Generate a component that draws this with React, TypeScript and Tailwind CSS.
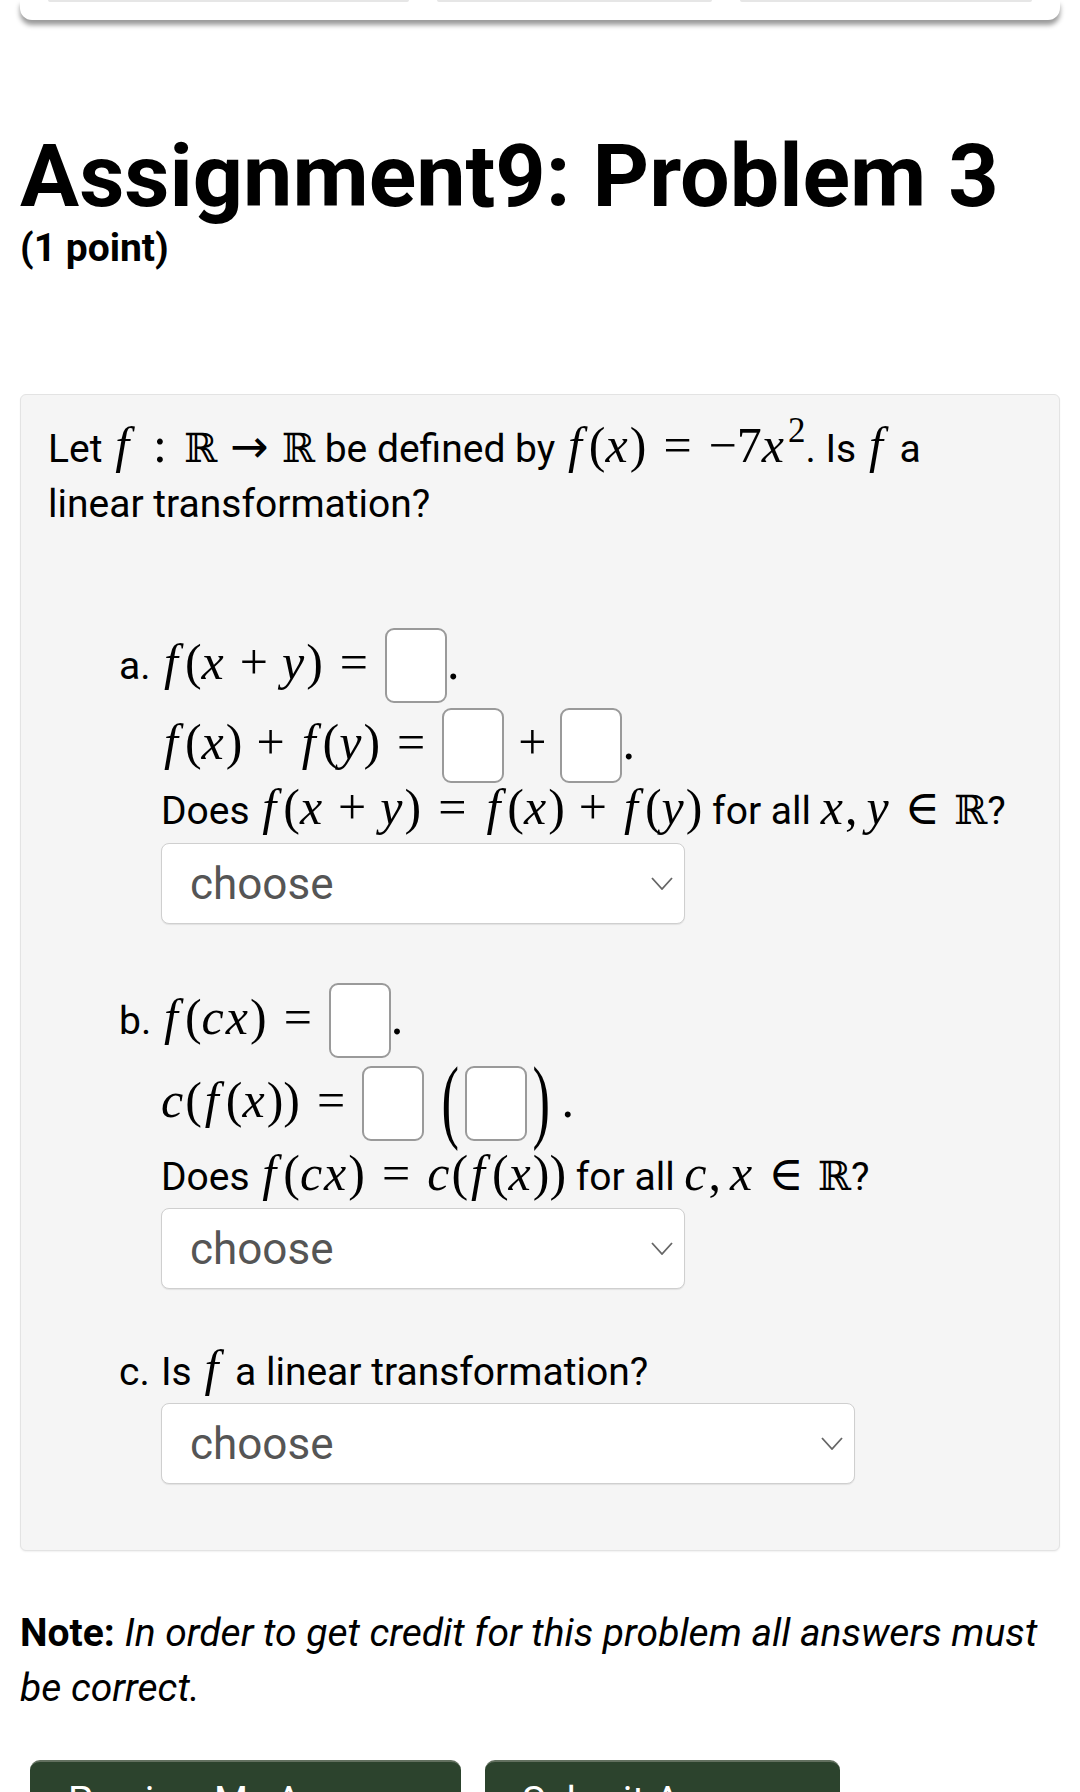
import React from "react";

function M({ children }: { children: React.ReactNode }) {
  return (
    <span className="font-['Liberation_Serif',serif] text-[50px] leading-[0] whitespace-nowrap text-black">
      {children}
    </span>
  );
}

function F() {
  return <i className="italic pl-[3px] pr-[7px]">f</i>;
}
function V({ c }: { c: string }) {
  return <i className="italic pr-[2px]">{c}</i>;
}
function Rel({ c }: { c: string }) {
  return <span className="px-[17px]">{c}</span>;
}
function Bin({ c }: { c: string }) {
  return <span className="px-[14px]">{c}</span>;
}
function Arrow() {
  return <span className="px-[13px] font-['DejaVu_Sans',sans-serif] text-[46px]">→</span>;
}
function In() {
  return <span className="px-[14px] font-['DejaVu_Serif','DejaVu_Sans',serif] text-[48px]">∈</span>;
}
function R() {
  return <span className="font-['DejaVu_Serif','DejaVu_Sans',serif] text-[40px]">ℝ</span>;
}
function Box() {
  return (
    <span className="inline-block align-baseline w-[62px] h-[75px] -mt-[51px] -mb-[24px] bg-white border-2 border-[#9a9a9a] rounded-[9px]" />
  );
}
function BigParen({ c }: { c: string }) {
  return (
    <span className="inline-block align-baseline scale-y-[1.85] scale-x-[1.05] origin-[50%_72%] px-[6px]">{c}</span>
  );
}

function Select({ w }: { w: string }) {
  return (
    <div
      className={`${w} h-[81px] bg-white border border-[#cfcfcf] rounded-[8px] shadow-[0_1px_1px_rgba(0,0,0,0.08)] flex items-center justify-between pl-[28px] pr-[11px]`}
    >
      <span className="text-[44px] leading-[44px] text-[#555]">choose</span>
      <svg width="22" height="13" viewBox="0 0 22 13" fill="none">
        <path d="M1 1 L11 12 L21 1" stroke="#666" strokeWidth="1.8" />
      </svg>
    </div>
  );
}

export default function App() {
  return (
    <div className="w-[1080px] h-[1792px] overflow-hidden bg-white font-['Roboto',sans-serif] text-black">
      {/* top card */}
      <div className="mx-[20px] h-[20px] bg-white rounded-b-[12px] shadow-[0_5px_5px_rgba(0,0,0,0.4)] flex gap-[28px] px-[28px]">
        <div className="w-[367px] h-[2px] bg-[#e6e6e6] rounded-b" />
        <div className="w-[280px] h-[2px] bg-[#e6e6e6] rounded-b" />
        <div className="w-[297px] h-[2px] bg-[#e6e6e6] rounded-b" />
      </div>

      <div className="px-[20px]">
        <h1 className="mt-[106px] text-[88px] leading-[100px] font-bold">
          Assignment9: Problem 3
        </h1>
        <div className="text-[39px] leading-[44px] font-bold">(1 point)</div>

        {/* problem box */}
        <div className="mt-[124px] bg-[#f5f5f5] border border-[#e3e3e3] rounded-[6px] shadow-[0_1px_2px_rgba(0,0,0,0.06)] pl-[27px] pr-[20px] pt-[27px] pb-[66px] text-[39px] leading-[55px]">
          <div>
            Let{" "}
            <M>
              <F />
              <Rel c=":" />
              <R />
              <Arrow />
              <R />
            </M>{" "}
            be defined by{" "}
            <M>
              <F />
              (<V c="x" />)
              <Rel c="=" />
              −7
              <V c="x" />
              <span className="inline-block relative -top-[20px] text-[35px] leading-[0] pl-[2px]">2</span>
            </M>
            . Is{" "}
            <M>
              <F />
            </M>{" "}
            a
            <br />
            linear transformation?
          </div>

          {/* part a */}
          <div className="flex mt-[107px]">
            <span className="w-[42px] ml-[71px] shrink-0">a.</span>
            <div>
              <div>
                <M>
                  <F />
                  (<V c="x" />
                  <Bin c="+" />
                  <V c="y" />)
                  <Rel c="=" />
                  <Box />.
                </M>
              </div>
              <div className="mt-[25px]">
                <M>
                  <F />
                  (<V c="x" />)
                  <Bin c="+" />
                  <F />
                  (<V c="y" />)
                  <Rel c="=" />
                  <Box />
                  <Bin c="+" />
                  <Box />.
                </M>
              </div>
              <div className="mt-[10px]">
                Does{" "}
                <M>
                  <F />
                  (<V c="x" />
                  <Bin c="+" />
                  <V c="y" />)
                  <Rel c="=" />
                  <F />
                  (<V c="x" />)
                  <Bin c="+" />
                  <F />
                  (<V c="y" />)
                </M>{" "}
                for all{" "}
                <M>
                  <V c="x" />,<span className="pl-[9px]" />
                  <V c="y" />
                  <In />
                  <R />
                </M>
                ?
              </div>
              <div className="mt-[4px]">
                <Select w="w-[524px]" />
              </div>
            </div>
          </div>

          {/* part b */}
          <div className="flex mt-[70px]">
            <span className="w-[42px] ml-[71px] shrink-0">b.</span>
            <div>
              <div>
                <M>
                  <F />
                  (<V c="c" />
                  <V c="x" />)
                  <Rel c="=" />
                  <Box />.
                </M>
              </div>
              <div className="mt-[28px]">
                <M>
                  <V c="c" />
                  (<F />
                  (<V c="x" />))
                  <Rel c="=" />
                  <Box />
                  <span className="pl-[12px]" />
                  <BigParen c="(" />
                  <Box />
                  <BigParen c=")" />
                  <span className="pl-[6px]">.</span>
                </M>
              </div>
              <div className="mt-[18px]">
                Does{" "}
                <M>
                  <F />
                  (<V c="c" />
                  <V c="x" />)
                  <Rel c="=" />
                  <V c="c" />
                  (<F />
                  (<V c="x" />))
                </M>{" "}
                for all{" "}
                <M>
                  <V c="c" />,<span className="pl-[9px]" />
                  <V c="x" />
                  <In />
                  <R />
                </M>
                ?
              </div>
              <div className="mt-[3px]">
                <Select w="w-[524px]" />
              </div>
            </div>
          </div>

          {/* part c */}
          <div className="flex mt-[56px]">
            <span className="w-[42px] ml-[71px] shrink-0">c.</span>
            <div>
              <div>
                Is{" "}
                <M>
                  <F />
                </M>{" "}
                a linear transformation?
              </div>
              <div className="mt-[3px]">
                <Select w="w-[694px]" />
              </div>
            </div>
          </div>
        </div>

        {/* note */}
        <div className="mt-[55px] text-[39px] leading-[55px]">
          <b className="font-bold">Note:</b>{" "}
          <i className="italic">
            In order to get credit for this problem all answers must
            <br />
            be correct.
          </i>
        </div>

        {/* buttons */}
        <div className="mt-[44px] ml-[10px] flex gap-[24px] items-start">
          <div className="w-[431px] bg-[#2c432d] border-t-2 border-[#62705f] rounded-t-[10px] text-white text-[39px] leading-[55px] pl-[38px] pt-[12px] pb-[30px]">
            Preview My Answers
          </div>
          <div className="w-[355px] bg-[#2c432d] border-t-2 border-[#62705f] rounded-t-[10px] text-white text-[39px] leading-[55px] pl-[37px] pt-[12px] pb-[30px]">
            Submit Answers
          </div>
        </div>
      </div>
    </div>
  );
}
